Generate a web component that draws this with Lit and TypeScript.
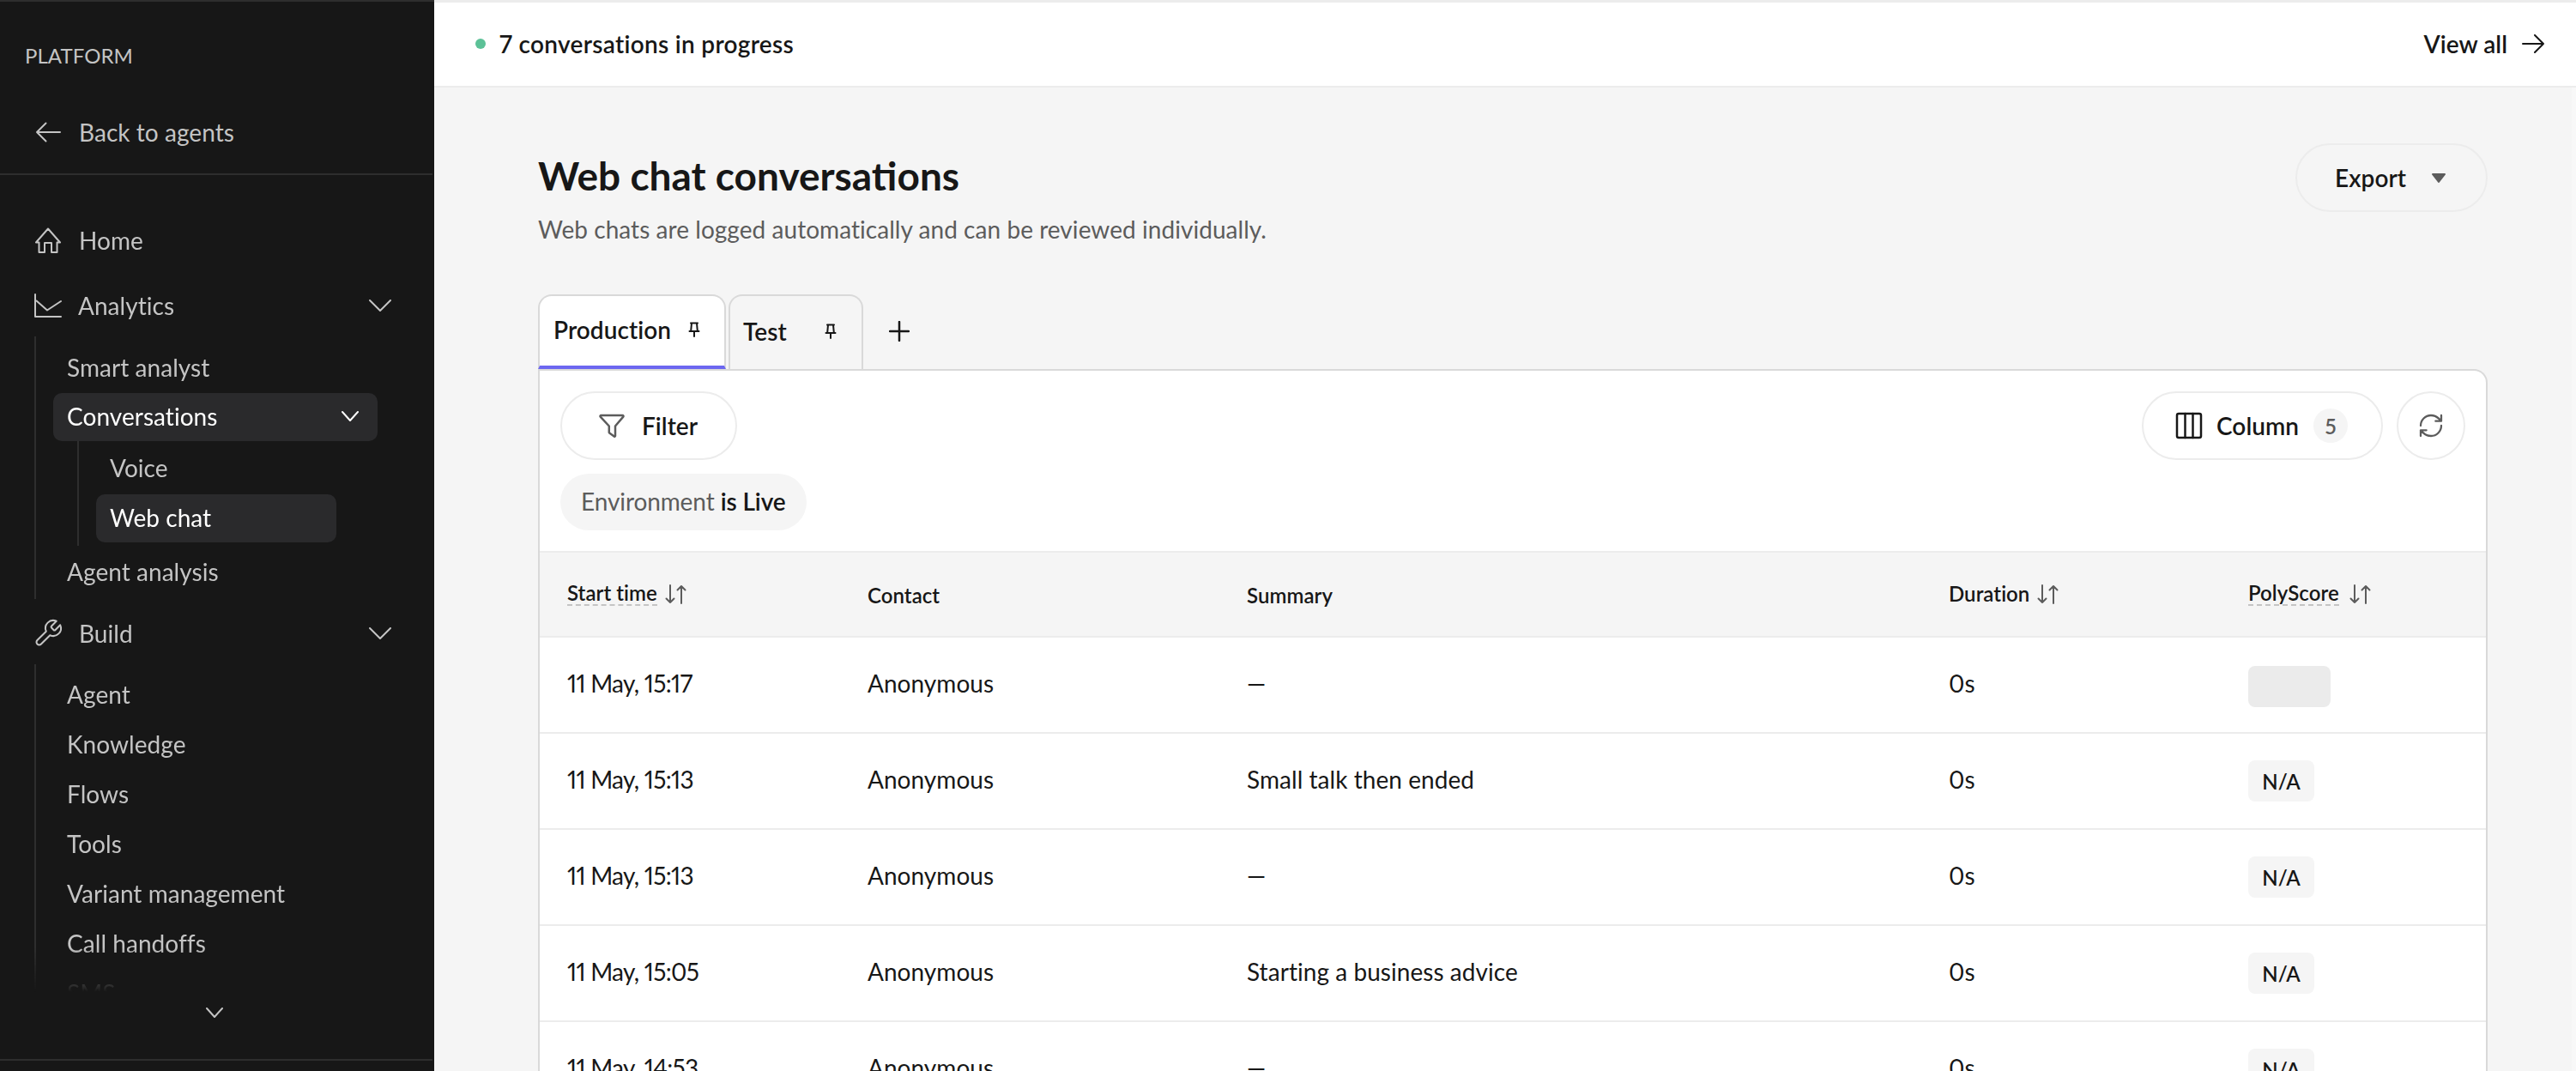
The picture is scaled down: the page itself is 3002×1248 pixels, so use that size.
import { LitElement, html, css, svg } from "lit";
import { customElement } from "lit/decorators.js";

const icon = (w: number, h: number, cls: string, body: unknown) => html`<svg class=${cls} width=${w} height=${h} viewBox="0 0 ${w} ${h}" fill="none" stroke="currentColor" stroke-linecap="round" stroke-linejoin="round">${body}</svg>`;

const chevron = (w: number, h: number, cls = "") => icon(w, h, cls, svg`<path d="M1 1 L${w / 2} ${h - 1} L${w - 1} 1" />`);
const pin = () => icon(14, 18, "pin", svg`<path d="M3 1.5h8M4 1.5 3.2 10.5M10 1.5l.8 9M1.5 11h11M7 11v6"/>`);
const sort = () => icon(26, 24, "sort", svg`<path d="M6 2v20M1.5 17.5 6 22l4.500-4.500M19 23V3M14.500 7.500 19 3l4.500 4.500"/>`);

interface Row { t: string; s: string; badge: string; }
const rows: Row[] = [
  { t: "11 May, 15:17", s: "—", badge: "" },
  { t: "11 May, 15:13", s: "Small talk then ended", badge: "N/A" },
  { t: "11 May, 15:13", s: "—", badge: "N/A" },
  { t: "11 May, 15:05", s: "Starting a business advice", badge: "N/A" },
  { t: "11 May, 14:53", s: "—", badge: "N/A" },
];

@customElement("app-root")
export class AppRoot extends LitElement {
  static styles = css`
    :host { display: block; width: 3002px; height: 1248px; overflow: hidden; font-family: Lato, "Liberation Sans", sans-serif; color: #171717; font-size: 28px; letter-spacing: 0.05px; font-variant-numeric: proportional-nums; }
    * { box-sizing: border-box; }
    svg { display: block; flex: none; }
    .app { display: flex; width: 3002px; height: 1248px; }

    .side { width: 506px; flex: none; height: 1248px; background: #171717; color: #c4c4c4; display: flex; flex-direction: column; border-top: 2px solid #2e2e2e; }
    .side-head { height: 202px; border-bottom: 2px solid #2e2e2e; width: 504px; padding-top: 48px; flex: none; }
    .platform { font-size: 24px; line-height: 30px; padding-left: 29px; }
    .back { height: 56px; margin-top: 46px; padding-left: 41px; display: flex; align-items: center; gap: 21px; }
    .nav { flex: none; height: 952px; overflow: hidden; padding-top: 48px; -webkit-mask-image: linear-gradient(#000 900px, transparent 952px); mask-image: linear-gradient(#000 900px, transparent 952px); }
    .row { height: 56px; display: flex; align-items: center; gap: 21px; padding: 0 50px 0 41px; }
    .row .grow { flex: 1; }
    .row.gapped { margin-top: 20px; }
    .row.build { margin-top: 12px; }
    .row .chart { margin: 0 -2px 0 -1px; }
    .row .wrench { margin: 0 -3px; }
    .sub { margin: 8px 0 0 40px; border-left: 2px solid #2e2e2e; width: 402px; padding: 9px 0 3px 20px; }
    .sub.second { padding-top: 8px; padding-bottom: 0; display: flex; flex-direction: column; gap: 2px; }
    .item { height: 56px; width: 378px; padding: 0 22px 2px 16px; display: flex; align-items: center; justify-content: space-between; border-radius: 10px; }
    .item.active { background: #2a2a2c; color: #fff; }
    .item.conv { margin-top: 1px; }
    .item.after { margin-top: 3px; }
    .subsub { margin-left: 28px; border-left: 2px solid #2e2e2e; padding: 4px 0 4px 20px; display: flex; flex-direction: column; gap: 2px; }
    .item.small { width: 280px; }
    .side-foot { flex: none; height: 80px; width: 504px; border-bottom: 2px solid #2e2e2e; padding-top: 18px; display: flex; justify-content: center; padding-right: 4px; }
    .side-foot svg { stroke-width: 2.5; }
    .side svg { stroke-width: 2; }

    .main { flex: 1; min-width: 0; height: 1248px; display: flex; flex-direction: column; background: #f5f5f5; overflow: hidden; }
    .top { flex: none; height: 102px; background: #fff; border-top: 3px solid #ececec; border-bottom: 2px solid #ececec; display: flex; align-items: center; padding: 0 37px 2px 48px; font-weight: 600; }
    .dot { width: 12px; height: 12px; border-radius: 50%; background: #5cc197; margin-right: 16px; }
    .grow { flex: 1; }
    .progress { letter-spacing: 0.3px; }
    .viewall { display: flex; align-items: center; gap: 17px; }
    .viewall svg { stroke-width: 2; }

    .content { flex: 1; padding: 65px 98px 0 121px; min-height: 0; }
    .head { display: flex; justify-content: space-between; align-items: flex-start; }
    .titles { padding-top: 10px; }
    h1 { margin: 0; font-size: 46px; line-height: 56px; font-weight: 700; letter-spacing: 0; }
    .subtitle { margin-top: 16px; line-height: 36px; color: #5c5c5c; }
    .pill { height: 80px; border: 2px solid #ececec; border-radius: 40px; display: flex; align-items: center; font-weight: 600; }
    .export { width: 224px; padding-left: 44px; gap: 30px; }
    .caret { width: 16px; height: 11px; color: #5c5c5c; fill: #5c5c5c; stroke: none; }

    .tabs { margin-top: 58px; display: flex; gap: 3px; height: 87px; align-items: stretch; }
    .tab { border: 2px solid #d9d9d9; border-bottom: none; border-radius: 16px 16px 0 0; display: flex; align-items: center; font-weight: 600; }
    .tab.on { width: 219px; padding: 0 0 4px 16px; background: #fff; border-bottom: 4px solid #6c67f0; gap: 20px; }
    .tab.off { width: 157px; padding: 0 0 3px 15px; gap: 44px; }
    .pin { stroke-width: 2; }
    .plus { width: 78px; display: flex; align-items: center; justify-content: center; padding-bottom: 2px; }
    .plus svg { stroke-width: 2.5; }

    .card { height: 900px; background: #fff; border: 2px solid #d9d9d9; border-bottom: none; border-radius: 0 16px 0 0; overflow: hidden; }
    .toolbar { padding: 24px 24px 24px 24px; }
    .tool-row { display: flex; align-items: center; gap: 16px; }
    .filter { width: 206px; padding-left: 43px; gap: 20px; }
    .filter svg { stroke-width: 2.5; color: #5c5c5c; }
    .column { width: 281px; padding-left: 37px; gap: 16px; }
    .column svg { stroke-width: 2.5; }
    .count { width: 40px; height: 40px; border-radius: 50%; background: #f5f5f5; color: #5c5c5c; font-size: 24px; display: flex; align-items: center; justify-content: center; margin-left: 1px; }
    .refresh { width: 80px; justify-content: center; color: #5c5c5c; }
    .refresh svg { stroke-width: 2; }
    .chip { margin-top: 16px; width: 287px; height: 66px; border-radius: 33px; background: #f5f5f5; display: flex; align-items: center; padding: 0 0 2px 24px; color: #5c5c5c; white-space: pre; letter-spacing: -0.1px; }
    .chip b { font-weight: 600; color: #171717; }

    .grid { display: grid; grid-template-columns: 350px 442px 818px 349px 1fr; padding-left: 32px; align-items: center; }
    .thead { height: 101px; background: #f5f5f5; border-top: 2px solid #ececec; border-bottom: 2px solid #ececec; font-size: 24px; font-weight: 600; }
    .th { display: flex; align-items: center; gap: 9px; padding-bottom: 2px; }
    .th.plain { padding-bottom: 0; padding-top: 2px; }
    .th.poly { gap: 12px; }
    .th span.dash { border-bottom: 2px dashed #c4c4c4; line-height: 27px; }
    .th svg { stroke-width: 2; color: #5c5c5c; }
    .tr { height: 112px; border-bottom: 2px solid #ececec; padding-bottom: 4px; }
    .date { letter-spacing: -0.7px; }
    .badge { width: 77px; height: 48px; border-radius: 8px; background: #f5f5f5; display: flex; align-items: center; justify-content: center; font-size: 24px; font-weight: 600; margin-top: 4px; }
    .badge.empty { width: 96px; background: #ebebeb; margin-top: 8px; }
    .scrollbar { width: 5px; flex: none; background: #f8f8f8; }
    .main-row { flex: 1; display: flex; min-height: 0; }
  `;

  render() {
    return html`<div class="app">
      <aside class="side">
        <div class="side-head">
          <div class="platform">PLATFORM</div>
          <div class="back">
            ${icon(30, 24, "", svg`<path d="M29 12H2M12.500 1.500 2 12l10.500 10.500"/>`)}
            <span>Back to agents</span>
          </div>
        </div>
        <nav class="nav">
          <div class="row">
            ${icon(30, 30, "", svg`<path d="M1 17.500 15 1.500l14 16h-3.500M1 17.500h3.500V29H11V18h8v11h6.500V17.500"/>`)}
            <span>Home</span>
          </div>
          <div class="row gapped">
            ${icon(32, 28, "chart", svg`<path d="M1 1v26h30M2.500 8.500 15 19.500 31 9"/>`)}
            <span class="grow">Analytics</span>
            ${chevron(26, 14)}
          </div>
          <div class="sub">
            <div class="item">Smart analyst</div>
            <div class="item active conv">Conversations ${chevron(20, 12)}</div>
            <div class="subsub">
              <div class="item small">Voice</div>
              <div class="item small active">Web chat</div>
            </div>
            <div class="item after">Agent analysis</div>
          </div>
          <div class="row build">
            ${icon(36, 36, "wrench", svg`<g transform="scale(1.500)"><path stroke-width="1.350" d="M14.700 6.300a1 1 0 0 0 0 1.400l1.600 1.600a1 1 0 0 0 1.400 0l3.770-3.770a6 6 0 0 1-7.940 7.940l-6.910 6.910a2.120 2.120 0 0 1-3-3l6.910-6.910a6 6 0 0 1 7.940-7.940l-3.760 3.760z"/></g>`)}
            <span class="grow">Build</span>
            ${chevron(26, 14)}
          </div>
          <div class="sub second">
            ${["Agent", "Knowledge", "Flows", "Tools", "Variant management", "Call handoffs", "SMS"].map((n) => html`<div class="item">${n}</div>`)}
          </div>
        </nav>
        <div class="side-foot">${chevron(20, 12)}</div>
      </aside>

      <main class="main">
        <header class="top">
          <span class="dot"></span>
          <span class="grow progress">7 conversations in progress</span>
          <span class="viewall">View all ${icon(26, 22, "", svg`<path d="M1 11h24M15 1l10 10-10 10"/>`)}</span>
        </header>
        <div class="main-row">
          <div class="content">
            <div class="head">
              <div class="titles">
                <h1>Web chat conversations</h1>
                <div class="subtitle">Web chats are logged automatically and can be reviewed individually.</div>
              </div>
              <div class="pill export">Export
                <svg class="caret" viewBox="0 0 16 11"><path d="M1 0h14a1 1 0 0 1 .8 1.600L8.800 10.500a1 1 0 0 1-1.600 0L.2 1.600A1 1 0 0 1 1 0z"/></svg>
              </div>
            </div>
            <div class="tabs">
              <div class="tab on"><span>Production</span>${pin()}</div>
              <div class="tab off"><span>Test</span>${pin()}</div>
              <div class="plus">${icon(24, 24, "", svg`<path d="M12 1v22M1 12h22"/>`)}</div>
            </div>
            <section class="card">
              <div class="toolbar">
                <div class="tool-row">
                  <div class="pill filter">
                    ${icon(30, 28, "", svg`<path d="M2.500 2h25a1 1 0 0 1 .8 1.600L19 14.500V26a.8.8 0 0 1-1.300.6l-5.500-4a1 1 0 0 1-.4-.8v-7.300L1.700 3.600A1 1 0 0 1 2.500 2z"/>`)}
                    <span>Filter</span>
                  </div>
                  <span class="grow"></span>
                  <div class="pill column">
                    ${icon(32, 32, "", svg`<rect x="2" y="2" width="28" height="28" rx="2"/><path d="M11.500 2v28M20.500 2v28"/>`)}
                    <span>Column</span>
                    <span class="count">5</span>
                  </div>
                  <div class="pill refresh">
                    ${icon(32, 32, "", svg`<g transform="scale(1.333)"><path stroke-width="1.700" d="M3 12a9 9 0 0 1 9-9 9.750 9.750 0 0 1 6.740 2.740L21 8M21 3v5h-5M21 12a9 9 0 0 1-9 9 9.750 9.750 0 0 1-6.740-2.740L3 16M8 16H3v5"/></g>`)}
                  </div>
                </div>
                <div class="chip">Environment <b>is Live</b></div>
              </div>
              <div class="grid thead">
                <div class="th"><span class="dash">Start time</span>${sort()}</div>
                <div class="th plain">Contact</div>
                <div class="th plain">Summary</div>
                <div class="th"><span>Duration</span>${sort()}</div>
                <div class="th poly"><span class="dash">PolyScore</span>${sort()}</div>
              </div>
              ${rows.map((r) => html`<div class="grid tr">
                <div class="date">${r.t}</div>
                <div>Anonymous</div>
                <div>${r.s}</div>
                <div>0s</div>
                <div>${r.badge ? html`<div class="badge">${r.badge}</div>` : html`<div class="badge empty"></div>`}</div>
              </div>`)}
            </section>
          </div>
          <div class="scrollbar"></div>
        </div>
      </main>
    </div>`;
  }
}
